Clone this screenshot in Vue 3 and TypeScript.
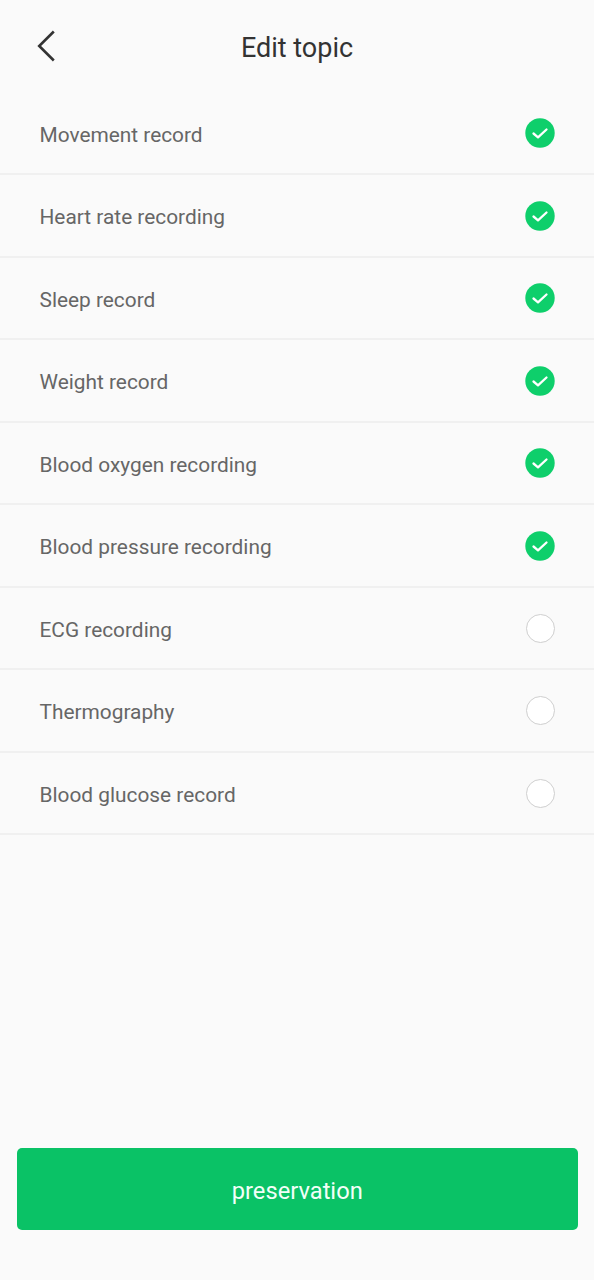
<script setup lang="ts">
const rows: { label: string; on: boolean }[] = [
  { label: 'Movement record', on: true },
  { label: 'Heart rate recording', on: true },
  { label: 'Sleep record', on: true },
  { label: 'Weight record', on: true },
  { label: 'Blood oxygen recording', on: true },
  { label: 'Blood pressure recording', on: true },
  { label: 'ECG recording', on: false },
  { label: 'Thermography', on: false },
  { label: 'Blood glucose record', on: false },
]
</script>

<template>
  <div class="page">
    <header class="bar">
      <svg class="back" width="20" height="34" viewBox="0 0 20 34">
        <path d="M17.8 2.5 L3.2 17 L17.8 31.5" fill="none" stroke="#333" stroke-width="2.6" />
      </svg>
      <h1 class="title">Edit topic</h1>
    </header>
    <ul class="list">
      <li v-for="r in rows" :key="r.label" class="row">
        <span class="label">{{ r.label }}</span>
        <svg v-if="r.on" class="mark" width="30" height="30" viewBox="0 0 30 30">
          <circle cx="15" cy="15" r="14.7" fill="#0ecf6b" />
          <path d="M8.5 15.5 L13 19.3 L21.5 11.5" fill="none" stroke="#fff" stroke-width="2.3" stroke-linecap="round" stroke-linejoin="round" />
        </svg>
        <span v-else class="empty"></span>
      </li>
    </ul>
    <div class="foot">
      <button class="save">preservation</button>
    </div>
  </div>
</template>

<style scoped>
.page {
  height: 1280px;
  background: #fafafa;
  display: flex;
  flex-direction: column;
  font-family: Roboto, sans-serif;
  overflow: hidden;
}
.bar {
  height: 92.5px;
  position: relative;
  display: flex;
  align-items: flex-start;
  justify-content: center;
  flex: none;
}
.back {
  position: absolute;
  left: 36px;
  top: 29px;
}
.title {
  margin: 31.5px 0 0;
  font-size: 27px;
  line-height: 33px;
  font-weight: 400;
  color: #333;
}
.list {
  list-style: none;
  margin: 0;
  padding: 0;
}
.row {
  height: 82.5px;
  box-sizing: border-box;
  border-bottom: 2px solid #f0f0f0;
  display: flex;
  align-items: center;
  justify-content: space-between;
  padding: 1px 39.5px 0 39.5px;
}
.label {
  font-size: 20.85px;
  color: #666;
  position: relative;
  top: 1.5px;
}
.empty {
  width: 27px;
  height: 27px;
  border: 1.2px solid #cfcfcf;
  border-radius: 50%;
  background: #fff;
}
.foot {
  margin-top: auto;
  padding: 0 16px 50px 16.5px;
}
.save {
  width: 100%;
  height: 82px;
  border: 0;
  border-radius: 5px;
  background: #0ac266;
  color: #f2fff8;
  font: 400 23.7px Roboto, sans-serif;
  padding: 3px 0 0;
}
</style>
